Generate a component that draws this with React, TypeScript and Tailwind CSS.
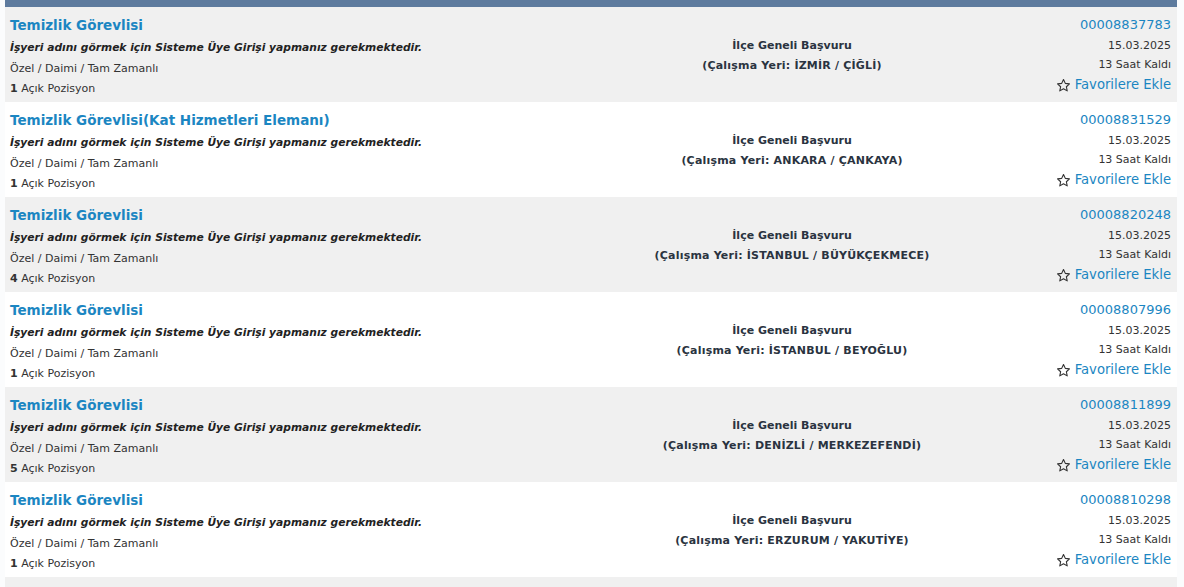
const jobs = [
  { title: "Temizlik Görevlisi", place: "İZMİR / ÇİĞLİ", id: "00008837783", count: 1 },
  { title: "Temizlik Görevlisi(Kat Hizmetleri Elemanı)", place: "ANKARA / ÇANKAYA", id: "00008831529", count: 1 },
  { title: "Temizlik Görevlisi", place: "İSTANBUL / BÜYÜKÇEKMECE", id: "00008820248", count: 4 },
  { title: "Temizlik Görevlisi", place: "İSTANBUL / BEYOĞLU", id: "00008807996", count: 1 },
  { title: "Temizlik Görevlisi", place: "DENİZLİ / MERKEZEFENDİ", id: "00008811899", count: 5 },
  { title: "Temizlik Görevlisi", place: "ERZURUM / YAKUTİYE", id: "00008810298", count: 1 },
]

function StarIcon() {
  return (
    <svg width="15" height="15" viewBox="0 0 24 24" fill="none" stroke="#333" strokeWidth="1.8" strokeLinejoin="round">
      <path d="M12 2.5l2.9 6.1 6.6.8-4.9 4.6 1.3 6.6L12 17.3l-5.9 3.3 1.3-6.6-4.9-4.6 6.6-.8z" />
    </svg>
  )
}

export default function App() {
  return (
    <div className="h-[587px] w-[1184px] overflow-hidden bg-[#fbfcfd] font-['DejaVu_Sans','Verdana',sans-serif] text-[#333]">
      <div className="ml-[5px] w-[1172px]">
        <div className="h-[7px] bg-[#5e7b9e]" />
        {jobs.map((job, i) => (
          <div
            key={job.id}
            className={`flex h-[95px] pl-[5px] pr-[6px] ${i % 2 === 0 ? "bg-[#f0f0f0]" : "bg-white"}`}
          >
            <div className="w-[560px] pt-[8px]">
              <div className="text-[13.5px] font-bold leading-[20px] text-[#1b86c2]">{job.title}</div>
              <div className="mt-[4px] text-[10.7px] font-bold italic leading-[18px] text-[#222]">
                İşyeri adını görmek için Sisteme Üye Girişi yapmanız gerekmektedir.
              </div>
              <div className="mt-[2px] text-[11px] leading-[20px]">Özel / Daimi / Tam Zamanlı</div>
              <div className="text-[11px] leading-[20px]">
                <b>{job.count}</b> Açık Pozisyon
              </div>
            </div>
            <div className="flex w-[444px] flex-col items-center pt-[29px] text-[11px] font-bold leading-[20px] text-[#2a3340]">
              <div>İlçe Geneli Başvuru</div>
              <div className="tracking-[0.2px]">(Çalışma Yeri: {job.place})</div>
            </div>
            <div className="flex flex-1 flex-col items-end pt-[8px] text-right">
              <div className="text-[13px] leading-[20px] text-[#1b86c2]">{job.id}</div>
              <div className="mt-[1px] text-[11px] leading-[19px]">15.03.2025</div>
              <div className="text-[11px] leading-[20px]">13 Saat Kaldı</div>
              <div className="flex items-center gap-[4px] text-[13.2px] leading-[20px] text-[#1b86c2]">
                <StarIcon />
                Favorilere Ekle
              </div>
            </div>
          </div>
        ))}
        <div className="h-[20px] bg-[#f0f0f0]" />
      </div>
    </div>
  )
}
